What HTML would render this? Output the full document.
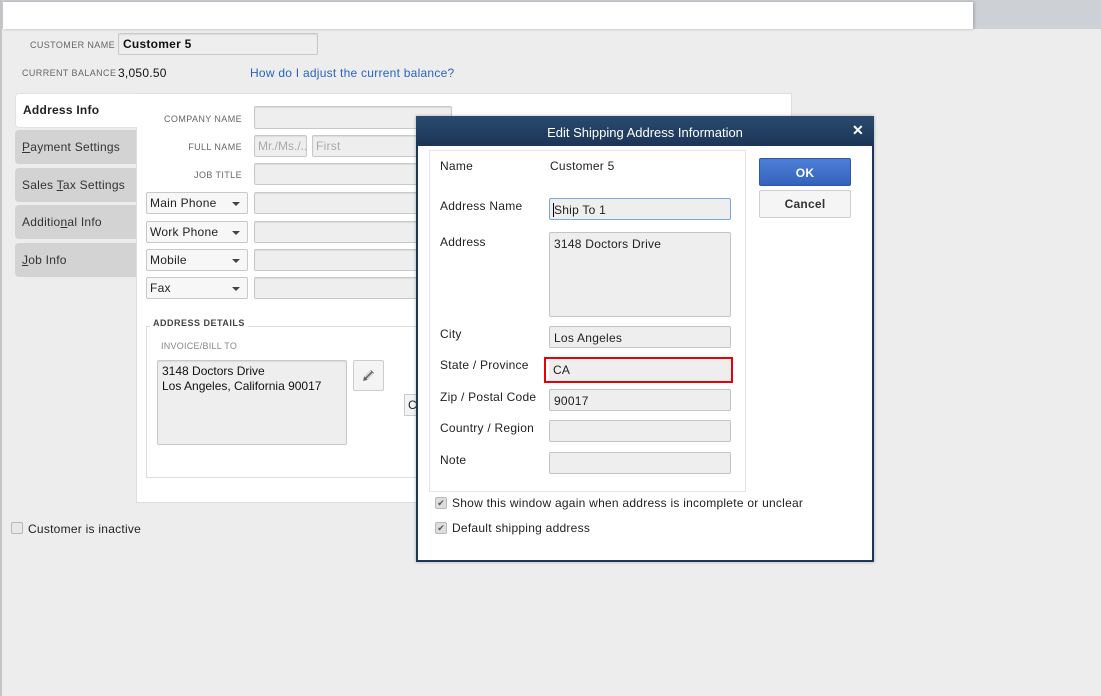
<!DOCTYPE html>
<html><head><style>
*{margin:0;padding:0;box-sizing:border-box}
body{width:1101px;height:696px;background:#ededed;font-family:"Liberation Sans",Arial,sans-serif;font-size:12px;letter-spacing:.25px;color:#222;position:relative;overflow:hidden}
.a{position:absolute}
.lbl{position:absolute;font-size:9px;color:#666;letter-spacing:.4px;text-align:right}
.in{position:absolute;background:#eeeeee;border:1px solid #c8c8c8;border-radius:2px;box-shadow:inset 0 1px 1px rgba(0,0,0,.08)}
.dd{position:absolute;background:#f7f7f7;border:1px solid #c8c8c8;border-radius:2px;font-size:12px;padding:3px 0 0 3px;width:102px;height:22px}
.dd:after{content:"";position:absolute;right:7px;top:9px;border-left:4px solid transparent;border-right:4px solid transparent;border-top:4px solid #444}
.tab{position:absolute;left:15px;width:121px;height:34px;background:#d3d3d3;border-radius:4px 0 0 4px;font-size:12px;padding:12px 0 0 7px;color:#333}
.dl{position:absolute;left:440px;font-size:12px;color:#222}
.di{position:absolute;left:549px;width:182px;height:22px;background:#eeeeee;border:1px solid #c4c4c4;border-radius:2px;font-size:12px;padding:4px 0 0 4px}
.cb{position:absolute;width:12px;height:12px;background:#ddd;border:1px solid #b8b8b8;border-radius:2px;font-size:9px;line-height:10px;text-align:center;color:#555;letter-spacing:0}
</style></head><body>
<div class="a" style="left:0;top:0;width:1101px;height:29px;background:#cdd0d5"></div>
<div class="a" style="left:3px;top:2px;width:970px;height:27px;background:#fff;box-shadow:1px 0 3px rgba(0,0,0,.25)"></div>
<div class="a" style="left:0;top:0;width:2px;height:696px;background:#c4c4c4"></div>

<div class="lbl" style="left:18px;top:40px;width:97px">CUSTOMER NAME</div>
<div class="in" style="left:118px;top:33px;width:200px;height:22px;font-weight:bold;font-size:12px;padding:3px 0 0 4px;color:#111">Customer 5</div>
<div class="lbl" style="top:68px;text-align:left;left:22px">CURRENT BALANCE</div>
<div class="a" style="left:118px;top:66px;font-size:12px;color:#111">3,050.50</div>
<div class="a" style="left:250px;top:66px;font-size:12px;color:#2a63c4">How do I adjust the current balance?</div>

<div class="a" style="left:136px;top:93px;width:656px;height:410px;background:#fff;border:1px solid #ddd"></div>
<div class="a" style="left:15px;top:93px;width:122px;height:35px;background:#fff;border-radius:4px 0 0 4px;border:1px solid #e2e2e2;border-right:none;font-weight:bold;padding:9px 0 0 7px">Address Info</div>
<div class="tab" style="top:130px;padding-top:10px"><u>P</u>ayment Settings</div>
<div class="tab" style="top:168px;padding-top:10px">Sales <u>T</u>ax Settings</div>
<div class="tab" style="top:205px;padding-top:10px">Additio<u>n</u>al Info</div>
<div class="tab" style="top:243px;padding-top:10px"><u>J</u>ob Info</div>

<div class="lbl" style="left:140px;top:114px;width:102px">COMPANY NAME</div>
<div class="lbl" style="left:140px;top:142px;width:102px">FULL NAME</div>
<div class="lbl" style="left:140px;top:170px;width:102px">JOB TITLE</div>
<div class="in" style="left:254px;top:106px;width:198px;height:23px"></div>
<div class="in" style="left:254px;top:135px;width:53px;height:22px;color:#aaa;padding:3px 0 0 3px;letter-spacing:0;overflow:hidden;white-space:nowrap">Mr./Ms./..</div>
<div class="in" style="left:312px;top:135px;width:110px;height:22px;color:#aaa;padding:3px 0 0 3px">First</div>
<div class="in" style="left:254px;top:163px;width:170px;height:22px"></div>
<div class="dd" style="left:146px;top:192px">Main Phone</div>
<div class="dd" style="left:146px;top:221px">Work Phone</div>
<div class="dd" style="left:146px;top:249px">Mobile</div>
<div class="dd" style="left:146px;top:277px">Fax</div>
<div class="in" style="left:254px;top:192px;width:170px;height:22px"></div>
<div class="in" style="left:254px;top:221px;width:170px;height:22px"></div>
<div class="in" style="left:254px;top:249px;width:170px;height:22px"></div>
<div class="in" style="left:254px;top:277px;width:170px;height:22px"></div>

<div class="a" style="left:146px;top:326px;width:280px;height:152px;border:1px solid #ddd"></div>
<div class="a" style="left:150px;top:318px;background:#fff;padding:0 3px;font-size:9px;font-weight:bold;color:#444;letter-spacing:.5px">ADDRESS DETAILS</div>
<div class="a" style="left:161px;top:341px;font-size:9px;color:#888">INVOICE/BILL TO</div>
<div class="in" style="left:157px;top:360px;width:190px;height:85px;padding:3px 0 0 4px;font-size:12px;line-height:15px;color:#111;letter-spacing:0">3148 Doctors Drive<br>Los Angeles, California 90017</div>
<div class="a" style="left:353px;top:360px;width:31px;height:31px;background:#f4f4f4;border:1px solid #ccc;border-radius:2px">
<svg width="29" height="29" viewBox="0 0 29 29"><path d="M9 20 L10 16 L17 9 L20 12 L13 19 Z" fill="#666"/><path d="M11 16 L17 10 M13 18 L19 12" stroke="#f4f4f4" stroke-width=".9"/></svg></div>
<div class="a" style="left:404px;top:394px;width:14px;height:22px;background:#f4f4f4;border:1px solid #ccc;font-size:12px;padding:3px 0 0 3px">C</div>

<div class="cb" style="left:11px;top:522px;background:#e8e8e8"></div>
<div class="a" style="left:28px;top:522px;font-size:12px">Customer is inactive</div>

<div class="a" style="left:416px;top:116px;width:458px;height:446px;background:#fff;border:2px solid #1e3556;box-shadow:0 0 3px rgba(0,0,0,.3)"></div>
<div class="a" style="left:416px;top:116px;width:458px;height:30px;background:linear-gradient(#2a4a70,#1c3556);color:#fff;font-size:13px;text-align:center;padding-top:9px;letter-spacing:0">Edit Shipping Address Information</div>
<div class="a" style="left:852px;top:122px;color:#fff;font-weight:bold;font-size:14px">✕</div>
<div class="a" style="left:429px;top:150px;width:317px;height:342px;border:1px solid #e4e4e4"></div>
<div class="dl" style="top:159px">Name</div><div class="a" style="left:550px;top:159px">Customer 5</div>
<div class="dl" style="top:199px">Address Name</div>
<div class="di" style="top:198px;border-color:#7ea7d8;padding-left:3px"><span style="border-left:1px solid #000">Ship To 1</span></div>
<div class="dl" style="top:235px">Address</div>
<div class="di" style="top:232px;height:85px">3148 Doctors Drive</div>
<div class="dl" style="top:327px">City</div><div class="di" style="top:326px">Los Angeles</div>
<div class="dl" style="top:358px">State / Province</div>
<div class="a" style="left:544px;top:357px;width:189px;height:26px;border:2px solid #e8000a"></div>
<div class="di" style="top:359px;border:none">CA</div>
<div class="dl" style="top:390px">Zip / Postal Code</div><div class="di" style="top:389px">90017</div>
<div class="dl" style="top:421px">Country / Region</div><div class="di" style="top:420px"></div>
<div class="dl" style="top:453px">Note</div><div class="di" style="top:452px"></div>
<div class="cb" style="left:435px;top:497px">✔</div><div class="a" style="left:452px;top:496px">Show this window again when address is incomplete or unclear</div>
<div class="cb" style="left:435px;top:522px">✔</div><div class="a" style="left:452px;top:521px">Default shipping address</div>
<div class="a" style="left:759px;top:158px;width:92px;height:28px;background:linear-gradient(#4d7fd6,#3463bd);border:1px solid #2d56a6;border-radius:2px;color:#fff;font-weight:bold;text-align:center;padding-top:7px">OK</div>
<div class="a" style="left:759px;top:190px;width:92px;height:28px;background:#f5f5f5;border:1px solid #cfcfcf;border-radius:2px;color:#333;font-weight:bold;text-align:center;padding-top:6px">Cancel</div>
</body></html>
